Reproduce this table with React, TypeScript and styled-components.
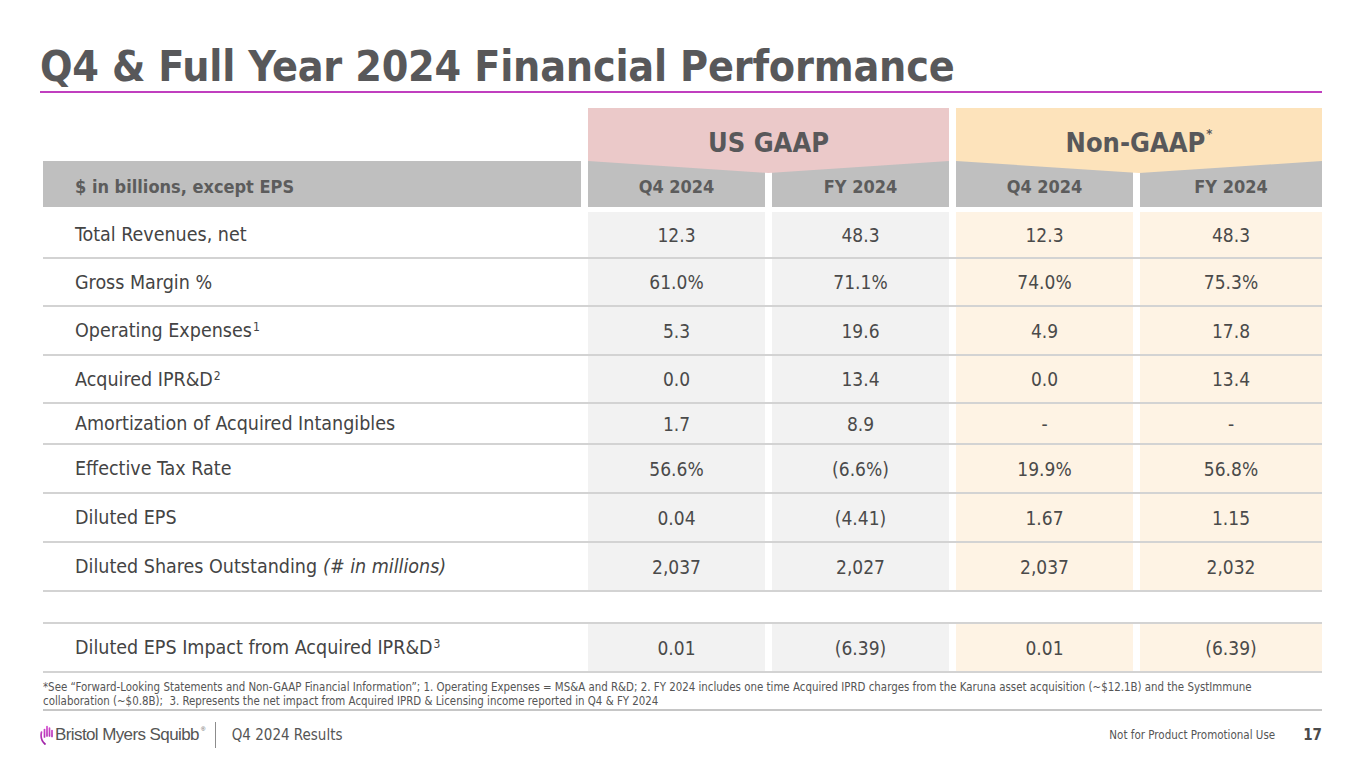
import React from "react";
import styled, { createGlobalStyle } from "styled-components";

const GlobalStyle = createGlobalStyle`
  html, body {
    margin: 0;
    padding: 0;
    background: #ffffff;
  }
  body {
    font-family: "DejaVu Sans Condensed", "DejaVu Sans", sans-serif;
    color: #4a4a4a;
  }
`;

const Page = styled.div`
  width: 1365px;
  height: 766px;
  box-sizing: border-box;
  padding: 0 43px 0 40px;
  display: flex;
  flex-direction: column;
  overflow: hidden;
`;

const TitleBar = styled.div`
  height: 93px;
  box-sizing: border-box;
  border-bottom: 2px solid #c03fbf;
  display: flex;
  align-items: flex-end;
  padding-bottom: 3px;
`;

const Title = styled.h1`
  margin: 0;
  font-family: "DejaVu Sans Condensed", "DejaVu Sans", sans-serif;
  font-weight: bold;
  font-size: 42.6px;
  line-height: 1;
  color: #58585a;
  letter-spacing: -0.2px;
`;

const Table = styled.div`
  margin: 15px 0 0 3px;
  display: flex;
  flex-direction: column;
`;

const Grid = styled.div<{ $h: number; $line?: boolean; $top?: boolean }>`
  display: grid;
  grid-template-columns: 538px 177px 177px 177px 182px;
  column-gap: 7px;
  height: ${(p) => p.$h}px;
  box-sizing: border-box;
  border-bottom: ${(p) => (p.$line ? "2px solid #d3d3d3" : "none")};
  border-top: ${(p) => (p.$top ? "2px solid #d3d3d3" : "none")};
`;

const Tab = styled.div<{ $col: number; $bg: string }>`
  grid-column: ${(p) => p.$col} / span 2;
  position: relative;
  z-index: 2;
  background: ${(p) => p.$bg};
  display: flex;
  align-items: center;
  justify-content: center;
  font-weight: bold;
  font-size: 27px;
  color: #58585a;
  padding-top: 16px;
  box-sizing: border-box;

  sup {
    font-size: 13px;
    position: relative;
    top: -9px;
    margin-left: 1px;
  }

  &::after {
    content: "";
    position: absolute;
    left: 0;
    right: 0;
    top: 100%;
    height: 12px;
    background: ${(p) => p.$bg};
    clip-path: polygon(0 0, 100% 0, 50% 100%);
  }
`;

const HeadCell = styled.div<{ $label?: boolean }>`
  background: #bfbfbf;
  display: flex;
  align-items: center;
  justify-content: ${(p) => (p.$label ? "flex-start" : "center")};
  padding-left: ${(p) => (p.$label ? "32px" : "0")};
  padding-top: 4px;
  box-sizing: border-box;
  font-weight: bold;
  font-size: 18px;
  color: #5c5c5c;
`;

const Label = styled.div`
  display: flex;
  align-items: center;
  padding-left: 32px;
  font-size: 19.5px;
  color: #444444;

  sup {
    font-size: 12px;
    align-self: flex-start;
    margin-top: 13px;
    margin-left: 1px;
  }
  em {
    margin-left: 6px;
  }
`;

const Value = styled.div<{ $tone: "gaap" | "non" }>`
  background: ${(p) => (p.$tone === "gaap" ? "#f2f2f2" : "#fef3e4")};
  display: flex;
  align-items: center;
  justify-content: center;
  font-size: 19px;
  color: #4a4a4a;
`;

const Gap = styled.div<{ $h: number }>`
  height: ${(p) => p.$h}px;
`;

const Notes = styled.div`
  margin: 8px 0 0 3px;
  padding-bottom: 1px;
  border-bottom: 2px solid #c6c6c6;
  font-size: 11.4px;
  line-height: 13.5px;
  color: #555555;
  white-space: nowrap;
`;

const Footer = styled.div`
  display: flex;
  align-items: center;
  height: 52px;
  padding-bottom: 4px;
  box-sizing: border-box;
`;

const Logo = styled.div`
  display: flex;
  align-items: center;
  gap: 2px;
  padding-right: 10px;
  border-right: 1px solid #8c8c8c;
  height: 26px;
  font-family: "Liberation Sans", Arial, sans-serif;
  font-size: 17px;
  letter-spacing: -0.6px;
  color: #555555;

  sup {
    font-size: 6px;
    align-self: flex-start;
    margin-top: 4px;
  }
`;

const Deck = styled.div`
  margin-left: 16px;
  font-size: 15px;
  color: #555555;
`;

const Right = styled.div`
  margin-left: auto;
  display: flex;
  align-items: center;
  gap: 28px;
  color: #555555;
`;

const Notice = styled.span`
  font-size: 11.5px;
`;

const PageNo = styled.span`
  font-size: 15px;
  font-weight: bold;
  color: #4a4a4a;
`;

type Row = {
  label: React.ReactNode;
  vals: [string, string, string, string];
  h: number;
};

const rows: Row[] = [
  { label: "Total Revenues, net", vals: ["12.3", "48.3", "12.3", "48.3"], h: 47 },
  { label: "Gross Margin %", vals: ["61.0%", "71.1%", "74.0%", "75.3%"], h: 48 },
  {
    label: (
      <>
        Operating Expenses<sup>1</sup>
      </>
    ),
    vals: ["5.3", "19.6", "4.9", "17.8"],
    h: 49,
  },
  {
    label: (
      <>
        Acquired IPR&amp;D<sup>2</sup>
      </>
    ),
    vals: ["0.0", "13.4", "0.0", "13.4"],
    h: 48,
  },
  { label: "Amortization of Acquired Intangibles", vals: ["1.7", "8.9", "-", "-"], h: 41 },
  { label: "Effective Tax Rate", vals: ["56.6%", "(6.6%)", "19.9%", "56.8%"], h: 49 },
  { label: "Diluted EPS", vals: ["0.04", "(4.41)", "1.67", "1.15"], h: 49 },
  {
    label: (
      <>
        Diluted Shares Outstanding<em>(# in millions)</em>
      </>
    ),
    vals: ["2,037", "2,027", "2,037", "2,032"],
    h: 49,
  },
];

const BmsMark = () => (
  <svg width="13" height="20" viewBox="0 0 13 20">
    <defs>
      <linearGradient id="bmsg" gradientUnits="userSpaceOnUse" x1="0" y1="0" x2="0" y2="20">
        <stop offset="0" stopColor="#d94fd2" />
        <stop offset="1" stopColor="#9a1fa3" />
      </linearGradient>
    </defs>
    <g stroke="url(#bmsg)" strokeWidth="1.7" strokeLinecap="round" fill="none">
      <path d="M1.5 7 C0.6 11 1.5 16 5 19" />
      <path d="M4.5 12 V4.5" />
      <path d="M7 11 V1.5" />
      <path d="M9.5 11 V3" />
      <path d="M12 11.5 V5.5" />
    </g>
  </svg>
);

const ValueCells = ({ vals }: { vals: string[] }) => (
  <>
    {vals.map((v, i) => (
      <Value key={i} $tone={i < 2 ? "gaap" : "non"}>
        {v}
      </Value>
    ))}
  </>
);

export default function App() {
  return (
    <>
      <GlobalStyle />
      <Page>
        <TitleBar>
          <Title>Q4 &amp; Full Year 2024 Financial Performance</Title>
        </TitleBar>
        <Table>
          <Grid $h={53}>
            <Tab $col={2} $bg="#ebc9c9">
              US GAAP
            </Tab>
            <Tab $col={4} $bg="#fde3bb">
              Non-GAAP<sup>*</sup>
            </Tab>
          </Grid>
          <Grid $h={46}>
            <HeadCell $label>$ in billions, except EPS</HeadCell>
            <HeadCell>Q4 2024</HeadCell>
            <HeadCell>FY 2024</HeadCell>
            <HeadCell>Q4 2024</HeadCell>
            <HeadCell>FY 2024</HeadCell>
          </Grid>
          <Gap $h={5} />
          {rows.map((r, i) => (
            <Grid key={i} $h={r.h} $line>
              <Label>{r.label}</Label>
              <ValueCells vals={r.vals} />
            </Grid>
          ))}
          <Gap $h={30} />
          <Grid $h={51} $line $top>
            <Label>
              Diluted EPS Impact from Acquired IPR&amp;D<sup>3</sup>
            </Label>
            <ValueCells vals={["0.01", "(6.39)", "0.01", "(6.39)"]} />
          </Grid>
        </Table>
        <Notes>
          *See “Forward-Looking Statements and Non-GAAP Financial Information”; 1. Operating Expenses = MS&amp;A and
          R&amp;D; 2. FY 2024 includes one time Acquired IPRD charges from the Karuna asset acquisition (~$12.1B) and
          the SystImmune
          <br />
          collaboration (~$0.8B);&nbsp; 3. Represents the net impact from Acquired IPRD &amp; Licensing income reported in
          Q4 &amp; FY 2024
        </Notes>
        <Footer>
          <Logo>
            <BmsMark />
            Bristol Myers Squibb<sup>®</sup>
          </Logo>
          <Deck>Q4 2024 Results</Deck>
          <Right>
            <Notice>Not for Product Promotional Use</Notice>
            <PageNo>17</PageNo>
          </Right>
        </Footer>
      </Page>
    </>
  );
}
